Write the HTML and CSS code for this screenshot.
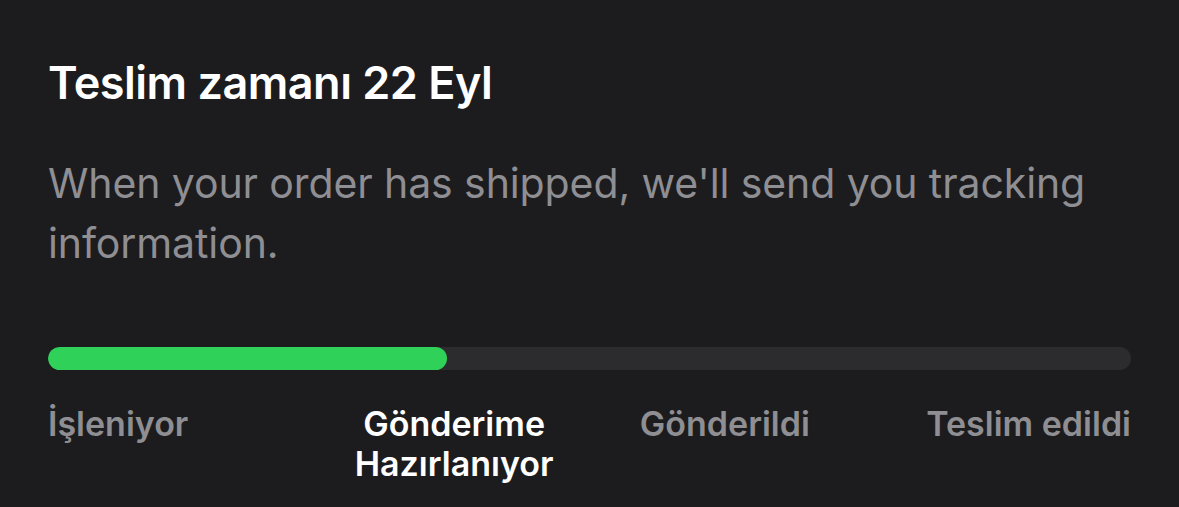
FILE: index.html
```html
<!DOCTYPE html>
<html lang="tr">
<head>
  <meta charset="UTF-8" />
  <meta name="viewport" content="width=device-width, initial-scale=1.0"/>
  <title>Teslim durumu</title>
  <link rel="stylesheet" href="styles.css">
</head>
<body>
  <div class="card">
    <h1 class="title">Teslim zamanı 22 Eyl</h1>
    <p class="note">When your order has shipped, we'll send you tracking information.</p>

    <div class="track">
      <div class="fill" style="width: 36.8%;"></div>
    </div>

    <div class="steps">
      <div class="step">İşleniyor</div>
      <div class="step active">Gönderime Hazırlanıyor</div>
      <div class="step">Gönderildi</div>
      <div class="step">Teslim edildi</div>
    </div>
  </div>
</body>
</html>
```

FILE: styles.css
```css
body {
  margin: 0;
  background: #1c1c1e;
  font-family: 'Inter', 'Noto Sans', sans-serif;
  color: #fff;
}
.card {
  padding: 55px 48px 0;
}
.title {
  margin: 0;
  font-size: 45px;
  line-height: 55px;
  font-weight: 600;
  letter-spacing: -0.5px;
}
.note {
  margin: 43px 0 0;
  font-size: 41px;
  line-height: 60px;
  font-weight: 400;
  letter-spacing: -0.1px;
  color: #8e8e93;
}
.track {
  margin-top: 74px;
  height: 23px;
  border-radius: 12px;
  background: #2c2c2e;
  overflow: hidden;
}
.fill {
  height: 100%;
  border-radius: 12px;
  background: #30d158;
}
.steps {
  margin-top: 34px;
  display: grid;
  grid-template-columns: repeat(4, 1fr);
  font-size: 34px;
  line-height: 40px;
  font-weight: 600;
  color: #8e8e93;
}
.step {
  text-align: center;
}
.step:first-child {
  text-align: left;
}
.step:last-child {
  text-align: right;
}
.step.active {
  color: #fff;
}
```
